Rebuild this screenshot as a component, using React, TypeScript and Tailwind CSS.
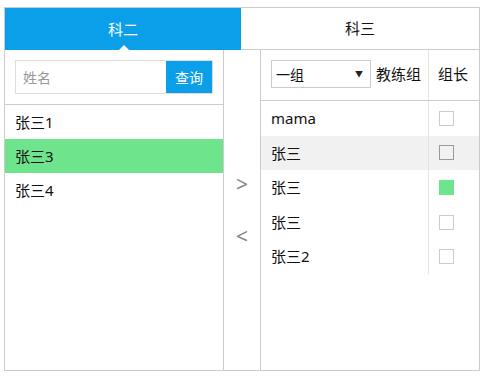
import React from 'react';

const LEFT_ROWS = [
  { name: '张三1', active: false },
  { name: '张三3', active: true },
  { name: '张三4', active: false },
];

const RIGHT_ROWS = [
  { name: 'mama', hover: false, leader: false },
  { name: '张三', hover: true, leader: false },
  { name: '张三', hover: false, leader: true },
  { name: '张三', hover: false, leader: false },
  { name: '张三2', hover: false, leader: false },
];

const FONT = { fontFamily: '"Noto Sans", "Noto Sans CJK SC", sans-serif' };

export default function App() {
  return (
    <div className="w-[486px] h-[377px] bg-white pt-[7px] pl-[4px] text-[#111]" style={FONT}>
      <div className="w-[476px] h-[364px] border border-[#cccccc] flex flex-col">
        {/* tabs */}
        <div className="flex h-[42px] shrink-0">
          <div className="w-[236px] bg-[#0b9fe9] relative flex items-center justify-center text-white text-[15px]">
            科二
            <span className="absolute bottom-0 left-[114px] w-0 h-0 border-l-[5px] border-r-[5px] border-b-[5px] border-l-transparent border-r-transparent border-b-white" />
          </div>
          <div className="flex-1 border-b border-[#cccccc] flex items-center justify-center text-[15px]">
            科三
          </div>
        </div>

        <div className="flex flex-1">
          {/* left list */}
          <div className="w-[219px] border-r border-[#cccccc] flex flex-col">
            <div className="p-[10px] border-b border-[#cccccc]">
              <div className="flex h-[34px] border border-[#dddddd]">
                <div className="flex-1 flex items-center pl-[7px] text-[14px] text-[#999]">姓名</div>
                <div className="w-[46px] bg-[#0b9fe9] text-white text-[14px] flex items-center justify-center">查询</div>
              </div>
            </div>
            {LEFT_ROWS.map((row) => (
              <div
                key={row.name}
                className={`h-[34px] pl-[10px] flex items-center text-[15px] ${row.active ? 'bg-[#6ee48c]' : ''}`}
              >
                {row.name}
              </div>
            ))}
          </div>

          {/* move buttons */}
          <div className="w-[37px] border-r border-[#cccccc] flex flex-col items-center pt-[122px] text-[21px] text-[#888]">
            <div className="h-[24px] leading-[24px]">&gt;</div>
            <div className="h-[24px] leading-[24px] mt-[28px]">&lt;</div>
          </div>

          {/* right table */}
          <div className="flex-1 flex flex-col">
            <div className="h-[51px] border-b border-[#cccccc] flex">
              <div className="w-[167px] flex items-start pt-[10px] pl-[10px]">
                <div className="w-[100px] h-[28px] border border-[#cccccc] flex items-center justify-between px-[4px] text-[14px]">
                  <span>一组</span>
                  <span className="text-[8px] text-[#222] pr-[3px]">▼</span>
                </div>
                <span className="ml-[5px] leading-[28px] text-[15px]">教练组</span>
              </div>
              <div className="flex-1 border-l border-[#e3e3e3] pl-[9px] pt-[10px] leading-[28px] text-[15px]">组长</div>
            </div>
            {RIGHT_ROWS.map((row, i) => (
              <div key={i} className={`h-[34.6px] flex ${row.hover ? 'bg-[#f1f1f1]' : ''}`}>
                <div className="w-[167px] pl-[10px] flex items-center text-[15px]">{row.name}</div>
                <div className="flex-1 border-l border-[#e3e3e3] pl-[10px] flex items-center">
                  <span
                    className={`w-[15px] h-[15px] ${
                      row.leader
                        ? 'bg-[#6ee48c]'
                        : row.hover
                          ? 'border border-[#999]'
                          : 'border border-[#cccccc]'
                    }`}
                  />
                </div>
              </div>
            ))}
          </div>
        </div>
      </div>
    </div>
  );
}
